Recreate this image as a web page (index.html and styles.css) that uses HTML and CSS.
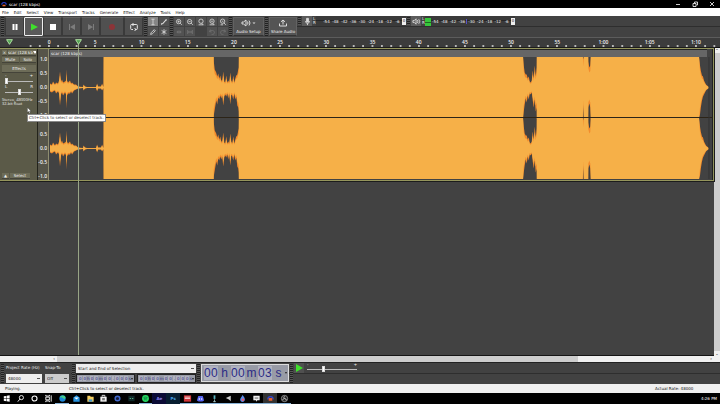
FILE: index.html
```html
<!DOCTYPE html>
<html lang="en">
<head>
    <meta charset="UTF-8">
    <meta name="viewport" content="width=device-width, initial-scale=1.0">
    <title>scar (128 kbps)</title>
    <link rel="stylesheet" href="styles.css">
</head>
<body>
    <header class="titlebar">
        <svg class="app-icon" viewBox="0 0 8 8"><path d="M1 5a3 3 0 0 1 6 0" fill="none" stroke="#2a3fd0" stroke-width="1.4"/><path d="M2 5h4v2H2z" fill="#e8642c"/></svg>
        <span class="title">scar (128 kbps)</span>
        <button class="win-btn" aria-label="Minimize"><svg viewBox="0 0 6 6"><path d="M1 3.5h4"/></svg></button>
        <button class="win-btn" aria-label="Restore"><svg viewBox="0 0 6 6"><path d="M1 2.5h3v3H1zM2.5 2V1h3v3H4.500"/></svg></button>
        <button class="win-btn" aria-label="Close"><svg viewBox="0 0 6 6"><path d="M1 1l4 4M5 1L1 5"/></svg></button>
    </header>

    <nav class="menu">
        <button>File</button>
        <button>Edit</button>
        <button>Select</button>
        <button>View</button>
        <button>Transport</button>
        <button>Tracks</button>
        <button>Generate</button>
        <button>Effect</button>
        <button>Analyze</button>
        <button>Tools</button>
        <button>Help</button>
    </nav>

    <section class="toolbars">
        <div class="grip"></div>
        <div class="transport">
            <button aria-label="Pause"><svg viewBox="0 0 10 10"><path d="M2.500 2h2v6h-2zM5.500 2h2v6h-2z" fill="#fff"/></svg></button>
            <button class="active" aria-label="Play"><svg viewBox="0 0 10 10"><path d="M2 1.500L9 5 2 8.500z" fill="#3fe02c"/></svg></button>
            <button aria-label="Stop"><svg viewBox="0 0 10 10"><path d="M2 2h6v6H2z" fill="#fff"/></svg></button>
            <button aria-label="Skip to start"><svg viewBox="0 0 10 10"><path d="M2 2h1v6H2zM8 2v6L3 5z" fill="#7c7c7c"/></svg></button>
            <button aria-label="Skip to end"><svg viewBox="0 0 10 10"><path d="M7 2h1v6H7zM2 2v6l5-3z" fill="#7c7c7c"/></svg></button>
            <button class="wide" aria-label="Record"><svg viewBox="0 0 10 10"><circle cx="5" cy="5" r="3" fill="#8c3438"/></svg></button>
            <button aria-label="Loop"><svg viewBox="0 0 10 10"><path d="M4 7.500H2.500a.8.8 0 0 1-.8-.8V3.300a.8.8 0 0 1 .8-.8h5a.8.8 0 0 1 .8.8v3.400a.8.8 0 0 1-.8.8H6M4.500 1L3 2.500 4.500 4M5.500 6L7 7.500 5.500 9" fill="none" stroke="#e4e4e4"/></svg></button>
        </div>
        <div class="grip"></div>
        <div class="tools">
            <button class="on" aria-label="Selection tool"><svg viewBox="0 0 10 10"><path d="M3 1.500h4M3 8.500h4M5 1.500v7"/></svg></button>
            <button aria-label="Envelope tool"><svg viewBox="0 0 10 10"><path d="M1.500 7.500L3.500 7 7 3l1.500-1M2 6.500v2M7.500 1.500v2" stroke-width="1.400"/></svg></button>
            <button aria-label="Draw tool"><svg viewBox="0 0 10 10"><path d="M2 8l.6-2L6.500 2 8 3.500 4 7.400zM5.500 3L7 4.500"/></svg></button>
            <button aria-label="Multi-tool"><svg viewBox="0 0 10 10"><path d="M5 1.500v7M2 3l6 4M8 3L2 7"/></svg></button>
        </div>
        <div class="grip"></div>
        <div class="tools edit">
            <button aria-label="Zoom in"><svg viewBox="0 0 10 10"><circle cx="4.500" cy="4.500" r="2.700"/><path d="M6.500 6.500L8.500 8.500M3.200 4.500h2.600M4.500 3.200v2.600"/></svg></button>
            <button aria-label="Zoom out"><svg viewBox="0 0 10 10"><circle cx="4.500" cy="4.500" r="2.700"/><path d="M6.500 6.500L8.500 8.500M3.200 4.500h2.600"/></svg></button>
            <button aria-label="Fit selection"><svg viewBox="0 0 10 10"><circle cx="5" cy="4" r="2.700"/><path d="M6 6.500L7.500 8.500M2 8.500h6"/></svg></button>
            <button aria-label="Fit project"><svg viewBox="0 0 10 10"><circle cx="5" cy="4" r="2.700"/><path d="M6 6.500L7.500 8.500M2 8.500h6M3.500 4h3"/></svg></button>
            <button aria-label="Zoom toggle"><svg viewBox="0 0 10 10"><circle cx="4.500" cy="4" r="2.700"/><path d="M6 6L8.500 8.500M3.500 4h2M2 8.500h3"/></svg></button>
            <button class="dim" aria-label="Trim"><svg viewBox="0 0 10 10"><path d="M2 5h6M3 3.500v3M5 3v4M7 3.500v3"/></svg></button>
            <button class="dim" aria-label="Silence"><svg viewBox="0 0 10 10"><path d="M2 2.500v5M8 2.500v5M3 5h4M3.500 3.500v3M6.500 3.500v3"/></svg></button>
            <span></span>
            <button class="dim" aria-label="Undo"><svg viewBox="0 0 10 10"><path d="M3 2L2 4.500l2.500.5M2 4.500C4 2 8 3 8 5.500S6 8 4.500 8"/></svg></button>
            <button class="dim" aria-label="Redo"><svg viewBox="0 0 10 10"><path d="M7 2l1 2.500-2.500.5M8 4.500C6 2 2 3 2 5.500S4 8 5.500 8"/></svg></button>
        </div>
        <div class="grip"></div>
        <button class="big-btn setup">
            <svg viewBox="0 0 16 8"><path d="M1 3h1.500L5 1v6L2.500 5H1z"/><path d="M6.500 2.500q1 1.500 0 3M8 1.500q2 2.500 0 5"/><path d="M11.500 3.500h3L13 5z" fill="#ddd" stroke="none"/></svg>
            Audio Setup
        </button>
        <div class="grip"></div>
        <button class="big-btn">
            <svg viewBox="0 0 16 8"><path d="M4.500 4.500V7h7V4.500M8 5.500V1M6 2.800L8 1l2 1.800"/></svg>
            Share Audio
        </button>
        <div class="meters">
            <div class="meter-row">
                <div class="grip"></div>
                <button class="meter-btn" aria-label="Record meter"><svg viewBox="0 0 10 10"><path d="M4 1.500h2v4H4z" fill="#ddd"/><path d="M2.800 4.500q0 2.500 2.200 2.500t2.200-2.500M5 7v2"/></svg></button>
                <div class="lr"><span>L</span><span>R</span></div>
                <div class="meter">
                    <div class="level empty"></div>
                    <span>-54</span><span>-48</span><span>-42</span><span>-36</span><span>-30</span><span>-24</span><span>-18</span><span>-12</span><span>-6</span>
                    <div class="clip">0</div>
                </div>
                <div class="grip"></div>
                <button class="meter-btn" aria-label="Playback meter"><svg viewBox="0 0 10 10"><path d="M1 4h1.500L4.500 2v6L2.500 6H1zM6 3.500q1 1.500 0 3M7.500 2.500q2 2.500 0 5"/></svg></button>
                <div class="lr"><span>L</span><span>R</span></div>
                <div class="meter">
                    <div class="level"></div>
                    <span>-54</span><span>-48</span><span>-42</span><span class="peak">-36</span><span>-30</span><span>-24</span><span>-18</span><span>-12</span><span>-6</span>
                    <div class="clip">0</div>
                </div>
            </div>
        </div>
    </section>

    <section class="timeline">
        <svg class="pin" viewBox="0 0 6 5"><path d="M.5.500h5L3 4.500z"/></svg>
        <div class="scale" id="scale"></div>
    </section>

    <main class="project">
        <div class="tracks">
            <article class="track">
                <div class="panel">
                    <div class="name-row">
                        <button aria-label="Close track">×</button>
                        <button class="name">scar (128 kb<i></i></button>
                    </div>
                    <div class="pair"><button>Mute</button><button>Solo</button></div>
                    <button class="effects">Effects</button>
                    <div class="slide-labels"><span>-</span><span>+</span></div>
                    <input class="slider" type="range" aria-label="Gain" min="0" max="100" value="2">
                    <div class="slide-labels"><span>L</span><span>R</span></div>
                    <input class="slider" type="range" aria-label="Pan" min="0" max="100" value="50">
                    <p>Stereo, 48000Hz<br>32-bit float</p>
                    <div class="foot"><button aria-label="Collapse">▲</button><button class="select">Select</button></div>
                </div>
                <div class="vruler">
                    <div><span>1.0</span><span>0.5</span><span>0.0</span><span>-0.5</span><span>-1.0</span></div>
                    <div><span>1.0</span><span>0.5</span><span>0.0</span><span>-0.5</span><span>-1.0</span></div>
                </div>
                <div class="wave">
                    <div class="clip-name">scar (128 kbps)</div>
                    <svg id="wave" viewBox="0 0 661 122" preserveAspectRatio="none"></svg>
                </div>
            </article>
            <div class="playhead"><svg viewBox="0 0 6 5"><path d="M.5.500h5L3 4.500z"/></svg></div>
            <svg class="cursor" viewBox="0 0 6 8"><path d="M.5.500v6l1.500-1.300 1 2.300 1-.5-1-2.200h2z"/></svg>
            <div class="tooltip" role="tooltip">Ctrl+Click to select or deselect track.</div>
        </div>
        <div class="vscroll"><span>⌃</span><span>⌄</span></div>
    </main>

    <div class="hscroll"><span>‹</span><div class="track-bar"><div class="thumb"></div></div><span>›</span></div>

    <section class="bottom-bars">
        <div class="grip"></div>
        <div class="field rate">
            <label for="rate">Project Rate (Hz)</label>
            <select id="rate"><option>48000</option></select>
        </div>
        <div class="field snap">
            <label for="snap">Snap-To</label>
            <select id="snap"><option>Off</option></select>
        </div>
        <div class="grip"></div>
        <div class="selection">
            <select aria-label="Selection mode"><option>Start and End of Selection</option></select>
            <div class="times">
                <div class="time"><b>0</b><b>0</b><i>h</i><b>0</b><b>0</b><i>m</i><b>0</b><b>0</b><b>.</b><b>0</b><b>0</b><b>0</b><i>s</i><u></u></div>
                <div class="time"><b>0</b><b>0</b><i>h</i><b>0</b><b>0</b><i>m</i><b>0</b><b>0</b><b>.</b><b>0</b><b>0</b><b>0</b><i>s</i><u></u></div>
            </div>
        </div>
        <div class="grip"></div>
        <div class="time big"><b>0</b><b>0</b><i>h</i><b>0</b><b>0</b><i>m</i><b>0</b><b>3</b><i>s</i><u></u></div>
        <div class="grip"></div>
        <div class="speed">
            <button aria-label="Play at speed"><svg viewBox="0 0 10 10"><path d="M2 1l7 4-7 4z" fill="#3fe02c"/></svg></button>
            <div class="speed-slide">
                <div class="slide-labels"><span>-</span><span>+</span></div>
                <input class="slider" type="range" aria-label="Playback speed" min="0" max="100" value="33">
            </div>
        </div>
    </section>

    <footer class="status">
        <span class="state">Playing.</span>
        <span class="hint">Ctrl+Click to select or deselect track.</span>
        <span class="actual">Actual Rate: 48000</span>
    </footer>

    <footer class="taskbar">
        <div class="apps">
            <button aria-label="Start"><svg viewBox="0 0 10 10"><path d="M2 2.500l2.700-.4v2.700H2zM5.200 2L8.500 1.500v3.300H5.200zM2 5.300h2.700V8L2 7.600zM5.200 5.300h3.300v3.300L5.200 8.100z" fill="#fff"/></svg></button>
            <button aria-label="Search"><svg viewBox="0 0 10 10"><circle cx="6" cy="4" r="2.300" fill="none" stroke="#fff"/><path d="M4.300 5.700L2 8.500" stroke="#fff"/></svg></button>
            <button aria-label="Cortana"><svg viewBox="0 0 10 10"><circle cx="5" cy="5" r="2.800" fill="none" stroke="#fff" stroke-width="1.200"/></svg></button>
            <button aria-label="Task view"><svg viewBox="0 0 10 10"><path d="M2 3.500h4v3H2zM2 1v1.300h4V1M2 9V7.700h4V9M8 1.500v7" fill="none" stroke="#fff"/></svg></button>
            <button class="run" aria-label="Edge"><svg viewBox="0 0 10 10"><circle cx="5" cy="5" r="3.500" fill="#1b86d6"/><path d="M2 4C3 1 8 .8 8.500 4.500 7 6.500 6 5 5.500 4.500 4 3 3 3.500 2 4z" fill="#44cf8a"/></svg></button>
            <button aria-label="Mail"><svg viewBox="0 0 10 10"><path d="M1.500 4L5 1.500 8.500 4v4.500h-7z" fill="#2794e0"/><path d="M2.500 4h5L5 6z" fill="#fff"/></svg></button>
            <button aria-label="File Explorer"><svg viewBox="0 0 10 10"><path d="M1.500 2h3l.7 1h3.300v5.500h-7z" fill="#f5cf62"/><path d="M3 6h4v2.500H3z" fill="#4295cc"/></svg></button>
            <button aria-label="Store"><svg viewBox="0 0 10 10"><path d="M1.500 3h7v5.500h-7z" fill="#f0f0f0"/><path d="M3.500 3V1.500h3V3" fill="none" stroke="#eee"/><path d="M3.500 4.500h3v2.500h-3z" fill="#777"/></svg></button>
            <button aria-label="Browser"><svg viewBox="0 0 10 10"><circle cx="5" cy="5" r="2.600" fill="#151a38" stroke="#4169cc" stroke-width="1.600"/></svg></button>
            <button aria-label="Editor"><svg viewBox="0 0 10 10"><path d="M1.500 2h7v6h-7z" fill="#0d2626"/><path d="M3 5h1.500M5.500 5H7" stroke="#5bb38a"/></svg></button>
            <button class="run" aria-label="Spotify"><svg viewBox="0 0 10 10"><circle cx="5" cy="5" r="3.800" fill="#28d962"/><path d="M2.800 3.800q2.300-1 4.500.3M3 5.200q2-.8 3.800.3M3.300 6.500q1.500-.5 3 .2" fill="none" stroke="#063" stroke-width=".7"/></svg></button>
            <button class="app-text ae">Ae</button>
            <button class="app-text ps">Ps</button>
            <button class="run" aria-label="Red app"><svg viewBox="0 0 10 10"><path d="M1 1.500h8v7H1z" fill="#d03438"/><path d="M2 3.500h6M2 5h6" stroke="#f3d3d3"/></svg></button>
            <button class="run" aria-label="Discord"><svg viewBox="0 0 10 10"><path d="M2.500 2.300h5L9 7.200 7 8.300H3L1 7.200z" fill="#5865f2"/><circle cx="3.700" cy="5.500" r=".8" fill="#fff"/><circle cx="6.300" cy="5.500" r=".8" fill="#fff"/></svg></button>
            <button class="run" aria-label="Microphone"><svg viewBox="0 0 10 10"><path d="M4 1.500h2v4H4z" fill="#58b4c0"/><path d="M5 6v3M3.500 8.500h3" stroke="#9bb"/></svg></button>
            <button class="run" aria-label="Game"><svg viewBox="0 0 10 10"><path d="M2 4.500L7.500 2v6L5.500 6z" fill="#ccc"/></svg></button>
            <button class="run" aria-label="Paint"><svg viewBox="0 0 10 10"><path d="M5 1C7 3.500 8 5 7.500 7A2.600 2.600 0 0 1 2.500 7C2 5 4 3.500 5 1z" fill="#5b8de8"/><circle cx="5.500" cy="6.500" r="1.400" fill="#e45a70"/></svg></button>
            <button class="run" aria-label="Chat"><svg viewBox="0 0 10 10"><path d="M1.500 2h7v5H6L4.500 8.500V7h-3z" fill="#eee"/><path d="M3 4.500h4" stroke="#555"/></svg></button>
            <button class="run current" aria-label="Audacity"><svg viewBox="0 0 10 10"><path d="M2 6a3 3 0 0 1 6 0" fill="none" stroke="#3347d0" stroke-width="1.300"/><path d="M3 4.500h4v3H3z" fill="#ee6330"/></svg></button>
            <button class="run" aria-label="OBS"><svg viewBox="0 0 10 10"><circle cx="5" cy="5" r="3.500" fill="#222" stroke="#aaa" stroke-width=".8"/><path d="M5 2.500q-1.500 1 0 2.500M5 5q2 0 2 2M5 5q-1.500 0-2 1.500" fill="none" stroke="#ccc"/></svg></button>
        </div>
        <time>4:26 PM</time>
    </footer>

    <script>
        const scale = document.querySelector('#scale');
        const wave = document.querySelector('#wave');

        for (let s = 0; s <= 70; s += 5) {
            const label = s < 60 ? s : `1:${String(s - 60).padStart(2, '0')}`;
            scale.innerHTML += `<span>${label}</span>`;
        }

        // x, peak above zero, peak below zero (full scale = 30)
        const peaks = [
            [0, 4, 4], [2, 3, 5], [3, 6, 4], [5, 3, 3], [6, 5, 6], [8, 4, 4], [9, 7, 6], [10, 16, 18], [11, 6, 7],
            [12, 8, 5], [13, 5, 8], [15, 6, 5], [16, 7, 7], [16.500, 18, 21], [17, 7, 8], [18, 5, 6], [20, 7, 6], [21, 4, 4],
            [22, 5, 6], [24, 3, 3], [26, 3, 2], [28, 1, 1], [33, 0.5, 0.5], [33.500, 3, 3], [35, 1, 1], [37, 0.5, 0.5],
            [46, 0.5, 0.5], [47, 4, 4], [48, 1, 1], [51, 1, 1], [52, 4, 3], [53, 1, 1], [53.500, 1, 1], [53.600, 30, 30],
            [163.400, 30, 30], [163.500, 26, 28], [164.500, 18, 22], [166, 15, 13], [167, 11, 17], [168, 14, 10], [169, 9, 12],
            [170, 12, 8], [171, 7, 11], [172, 7, 8], [173, 16, 18], [174, 6, 9], [175, 5, 7], [176, 12, 9], [177, 5, 6],
            [178, 7, 11], [179, 5, 6], [180, 15, 17], [181, 7, 7], [182, 5, 8], [183, 12, 12], [184, 5, 6], [185, 9, 12],
            [186, 12, 9], [187, 13, 18], [188, 18, 20], [188.500, 20, 24], [188.600, 30, 30],
            [472.300, 30, 30], [473, 22, 24], [474, 15, 17], [475, 13, 11], [476, 13, 15], [477, 9, 8], [478, 11, 12],
            [479, 6, 6], [480, 5, 7], [481, 7, 5], [482, 17, 13], [483, 9, 20], [484, 22, 12], [485, 11, 24], [486, 20, 20], [486.100, 30, 30],
            [532, 30, 30], [532.500, 28, 17], [533, 30, 30], [537.400, 30, 30], [537.500, 26, 20], [538.500, 20, 16], [539.500, 22, 20],
            [540, 30, 30], [648, 30, 30], [649, 22, 27], [650, 16, 19], [651, 12, 13], [652, 11, 9], [653, 7, 7],
            [655, 3, 3], [656, 2, 2], [658, 0.5, 0.5]
        ];

        function outline(mid, inner) {
            const amp = a => a < 29 ? a * inner : 31;
            const top = peaks.map(p => `${p[0]},${mid - amp(p[1])}`);
            const bottom = peaks.map(p => `${p[0]},${mid + amp(p[2])}`).reverse();
            return top.concat(bottom).join(' ');
        }

        [30.500, 91.500].forEach(mid => {
            wave.innerHTML += `<polygon class="peak-fill" points="${outline(mid, 1)}"/>`;
            wave.innerHTML += `<polygon class="rms-fill" points="${outline(mid, 0.75)}"/>`;
        });
        wave.innerHTML += '<path class="split" d="M0 60.500h661"/><path class="clip-end" d="M658 0v122"/>';
    </script>
</body>
</html>
```
FILE: styles.css
```css
* {
    box-sizing: border-box;
}
body {
    margin: 0;
    height: 100vh;
    display: flex;
    flex-direction: column;
    overflow: hidden;
    background: #424242;
    color: #f0f0f0;
    font: 4px/5px "DejaVu Sans", sans-serif;
}
button, select, input {
    margin: 0;
    padding: 0;
    border: 0;
    background: none;
    color: inherit;
    font: inherit;
    appearance: none;
}
svg {
    display: block;
    fill: none;
}
i, b, u {
    font-style: normal;
    font-weight: normal;
    text-decoration: none;
}

.titlebar {
    display: flex;
    align-items: center;
    height: 8px;
    background: #000;
    color: #fff;
}
.app-icon {
    width: 6px;
    height: 6px;
    margin: 0 2px 0 1px;
}
.title {
    flex: 1;
}
.win-btn {
    width: 17px;
}
.win-btn svg {
    width: 6px;
    height: 6px;
    margin: auto;
    stroke: #fff;
    stroke-width: .8;
}

.menu {
    display: flex;
    gap: 5px;
    height: 8px;
    padding-left: 2px;
    background: #fff;
    color: #111;
}

.toolbars {
    display: flex;
    height: 22px;
    background: #424242;
    border-bottom: 1px solid #5c5c5c;
}
.grip {
    flex: none;
    width: 3px;
    margin: 1px 1px;
    background: repeating-linear-gradient(#222 0 1px, #555 1px 2px);
}
.transport {
    display: flex;
    padding: 1px 0;
}
.transport button {
    width: 19px;
    background: #505050;
    border: 1px solid #3a3a3a;
    border-top-color: #646464;
}
.transport .wide {
    width: 24px;
}
.transport .active {
    border: 1px solid #eee;
    border-radius: 1px;
    background: #5a5a5a;
}
.transport svg {
    width: 10px;
    height: 10px;
    margin: auto;
}
.tools {
    display: grid;
    grid-template: 1fr 1fr / repeat(2, 10px);
    padding: 1px 0;
    gap: 1px;
}
.edit {
    grid-template-columns: repeat(5, 10px);
}
.tools button {
    background: #525252;
    display: grid;
    place-items: center;
}
.tools .on {
    background: #858585;
}
.tools svg {
    width: 8px;
    height: 8px;
    stroke: #ddd;
}
.tools .dim svg {
    stroke: #747474;
}
.big-btn {
    width: 28px;
    margin: 1px 0;
    background: #545454;
    border: 1px solid #626262;
    border-bottom-color: #333;
    white-space: nowrap;
    display: flex;
    flex-direction: column;
    align-items: center;
    justify-content: center;
    gap: 2px;
}
.setup {
    width: 31px;
}
.big-btn svg {
    width: 16px;
    height: 8px;
    stroke: #ddd;
}
.meters {
    flex: 1;
}
.meter-row {
    display: flex;
    height: 11px;
    border-bottom: 1px solid #2e2e2e;
}
.meter-btn {
    width: 10px;
    background: #5c5c5c;
}
.meter-btn svg {
    width: 9px;
    height: 9px;
    stroke: #ddd;
    margin: auto;
}
.lr {
    width: 4px;
    padding: 1px 0 1px 1px;
    line-height: 4px;
    display: flex;
    flex-direction: column;
}
.meter {
    display: flex;
    align-items: center;
    width: 90px;
    padding-top: 1px;
    background: linear-gradient(#3a3a3a 0 4px, #262626 4px 5px, #3a3a3a 5px);
}
.meter span {
    flex: 1;
    text-align: center;
}
.meter .peak {
    border-right: 1px solid #5252c8;
}
.level {
    width: 6px;
    height: 8px;
    background: linear-gradient(#36c83c 0 4px, #1d6d20 4px 5px, #36c83c 5px);
}
.empty {
    background: none;
}
.clip {
    width: 4px;
    height: 7px;
    background: #eee;
    color: #222;
    text-align: center;
}

.timeline {
    position: relative;
    height: 10px;
    background: #3c3c3c;
    border-bottom: 1px solid #111;
}
.pin {
    position: absolute;
    left: 6px;
    top: 1px;
    width: 7px;
    height: 6px;
}
.pin, .playhead svg {
    fill: #52a052;
    stroke: #b6e6a8;
    stroke-width: .8;
}
.scale {
    display: grid;
    grid-template-columns: repeat(15, 1fr);
    height: 9px;
    padding: 0 1px 0 26px;
}
.scale span {
    text-align: center;
    font: 600 5px/8px "Open Sans", sans-serif;
    background: linear-gradient(90deg, transparent 45%, #b8b8b8 45% 56%, transparent 56%) 0 100% / 20% 2px repeat-x;
}

.project {
    flex: 1;
    display: flex;
    min-height: 0;
}
.tracks {
    position: relative;
    flex: 1;
    background: #424242;
    border-bottom: 1px solid #151515;
}
.track {
    display: flex;
    height: 133px;
    border: 1px solid #94955c;
    border-left: 0;
    outline: 1px solid #1c1c1c;
}
.panel {
    display: flex;
    flex-direction: column;
    width: 38px;
    padding: 1px 1px 1px 2px;
    background: #5b5a48;
    border-right: 1px solid #24241c;
}
.panel button {
    background: #6d6c58;
    border-bottom: 1px solid #45443a;
    height: 6px;
    line-height: 5px;
}
.name-row {
    display: flex;
    gap: 1px;
    height: 7px;
}
.name-row button:first-child {
    width: 5px;
}
.name-row .name {
    flex: 1;
    display: flex;
    align-items: center;
    overflow: hidden;
    white-space: nowrap;
}
.name i {
    border: 2px solid transparent;
    border-top: 3px solid #fff;
    border-bottom: 0;
}
.pair {
    display: flex;
    gap: 1px;
}
.pair button {
    flex: 1;
}
.panel .effects {
    margin-top: 2px;
    height: 8px;
    line-height: 7px;
}
.slide-labels {
    display: flex;
    justify-content: space-between;
    height: 4px;
    line-height: 4px;
    padding: 0 3px;
}
.panel .slide-labels {
    margin-top: 1px;
}
.slider {
    display: block;
    width: 100%;
    height: 6px;
    padding: 0 2px;
    background: linear-gradient(#bbb, #bbb) 50% 50% / calc(100% - 6px) 1px no-repeat;
}
.slider::-webkit-slider-thumb {
    appearance: none;
    width: 3px;
    height: 6px;
    background: #fff;
    border: 1px solid #ddd;
}
.panel p {
    margin: 3px 0 0;
    line-height: 4px;
    white-space: nowrap;
    font-family: "Open Sans", sans-serif;
}
.foot {
    display: flex;
    gap: 1px;
    margin-top: auto;
}
.foot button {
    width: 7px;
}
.foot .select {
    width: 20px;
}
.vruler {
    width: 11px;
    background: #56554a;
    border-right: 1px solid #8e8d70;
}
.vruler div {
    height: 61px;
    display: flex;
    flex-direction: column;
    justify-content: space-between;
    font: 600 5px/5px "Open Sans", sans-serif;
    text-align: right;
    padding-right: 1px;
}
.vruler div:first-child {
    margin-top: 8px;
}
.wave {
    flex: 1;
    min-width: 0;
    background: #424242;
    padding-left: 1px;
    border-right: 1px solid #222;
}
.clip-name {
    height: 8px;
    line-height: 7px;
    margin-right: 5px;
    padding-left: 1px;
    background: #666;
    border-top: 1px solid #222;
}
.wave svg {
    width: 100%;
    height: 122px;
}
.peak-fill {
    fill: #f38b2c;
}
.rms-fill {
    fill: #f6b048;
}
.split {
    stroke: #2c2418;
}
.clip-end {
    stroke: #333;
}
.playhead {
    position: absolute;
    left: 78px;
    top: -4px;
    bottom: 0;
    width: 1px;
    background: #98a586;
}
.playhead svg {
    position: absolute;
    left: -3px;
    top: -5px;
    width: 7px;
    height: 6px;
}
.cursor {
    position: absolute;
    left: 27px;
    top: 59px;
    width: 5px;
    height: 7px;
    fill: #fff;
    stroke: #222;
    stroke-width: .4;
}
.tooltip {
    position: absolute;
    left: 27px;
    top: 66px;
    padding: 0 1px;
    line-height: 6px;
    background: #fff;
    color: #333;
    border: 1px solid #888;
    white-space: nowrap;
}
.vscroll {
    display: flex;
    flex-direction: column;
    justify-content: space-between;
    width: 6px;
    background: #cdcdcd;
    color: #222;
    text-align: center;
}
.vscroll span, .hscroll span {
    background: #f0f0f0;
    width: 6px;
}

.hscroll {
    display: flex;
    height: 7px;
    padding-left: 51px;
    padding-right: 6px;
    background: #f0f0f0;
    color: #222;
    border-bottom: 1px solid #222;
    text-align: center;
    font-weight: bold;
}
.track-bar {
    flex: 1;
}
.thumb {
    width: 80%;
    height: 6px;
    background: #cdcdcd;
}

.bottom-bars {
    display: flex;
    height: 21px;
    background: linear-gradient(#424242 0 10px, #2e2e2e 10px 11px, #424242 11px);
}
.field {
    display: flex;
    flex-direction: column;
    justify-content: space-between;
    padding: 2px 2px 1px 1px;
    white-space: nowrap;
    background: #424242;
}
.rate {
    width: 39px;
}
.snap {
    width: 27px;
}
.bottom-bars select {
    height: 9px;
    width: 100%;
    padding-left: 2px;
    background: #eee linear-gradient(#555, #555) calc(100% - 2px) 50% / 3px 1px no-repeat;
    color: #222;
}
.bottom-bars .snap select {
    background-color: #ccc;
}
.selection {
    display: flex;
    flex-direction: column;
    justify-content: space-between;
    width: 120px;
    padding: 1px 0;
}
.times {
    display: flex;
    gap: 2px;
}
.time {
    flex: 1;
    min-width: 0;
    display: flex;
    align-items: center;
    padding: 0 1px;
    height: 9px;
    background: #989ba6;
    color: #2b2b85;
    border: 1px solid #222;
}
.time b {
    background: #b0b2bf;
    padding-left: 1px;
    border-right: 1px solid #989ba6;
}
.time u {
    margin-left: auto;
    border: 1px solid transparent;
    border-top: 2px solid #222;
    border-bottom: 0;
}
.time.big {
    flex: none;
    width: 88px;
    height: 18px;
    margin-top: 1px;
    padding-left: 2px;
    font: 12px/14px "Liberation Sans", sans-serif;
    border: 1px solid #ddd;
}
.big b {
    width: 7px;
    padding: 0;
    border: 0;
}
.big i {
    flex: 1;
    text-align: center;
}
.speed {
    display: flex;
    height: 10px;
}
.speed button {
    width: 10px;
    background: #505050;
}
.speed-slide {
    width: 56px;
}
.speed .slide-labels {
    height: 3px;
}

.status {
    display: flex;
    height: 9px;
    line-height: 9px;
    background: #f0f0f0;
    color: #111;
    padding-left: 5px;
}
.state {
    width: 64px;
}
.hint {
    flex: 1;
}
.actual {
    width: 65px;
}

.taskbar {
    display: flex;
    justify-content: space-between;
    align-items: center;
    height: 11px;
    background: #000;
    color: #fff;
    padding-right: 3px;
}
.apps {
    display: grid;
    grid-template-columns: repeat(21, 1fr);
    width: 291px;
    height: 11px;
}
.apps button {
    border-bottom: 1px solid transparent;
}
.apps .run {
    border-bottom-color: #8ab4d8;
}
.apps .current {
    background: #333;
}
.apps svg {
    width: 9px;
    height: 9px;
    margin: auto;
}
.app-text {
    font-weight: bold;
}
.ae {
    color: #8f86f5;
    background: #0b0b35;
}
.ps {
    color: #45a0e0;
    background: #071d30;
}
```
